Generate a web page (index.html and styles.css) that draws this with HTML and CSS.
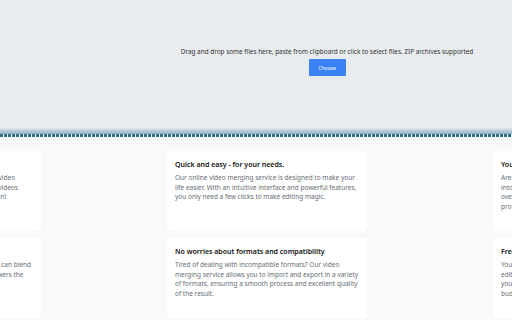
FILE: index.html
```html
<!DOCTYPE html>
<html lang="en">
<head>
  <meta charset="UTF-8">
  <title>Merge videos</title>
  <meta name="viewport" content="width=device-width, initial-scale=1.0">
  <link rel="stylesheet" href="styles.css">
</head>
<body>

  <div class="dropzone">
    <div class="drop-inner">
      <p class="drop-text">Drag and drop some files here, paste from clipboard or click to select files. ZIP archives supported</p>
      <button class="choose">Choose</button>
    </div>
  </div>
  <div class="edge"></div>

  <div class="features">
    <div class="row">
      <div class="card">
        <h3>Merge videos in your browser</h3>
        <p>Put your best moments together with our online video<br>merger and create one smooth story from many videos<br>and share it with all the people you know. Have fun!</p>
      </div>
      <div class="card">
        <h3>Quick and easy - for your needs.</h3>
        <p>Our online video merging service is designed to make your life easier. With an intuitive interface and powerful features, you only need a few clicks to make editing magic.</p>
      </div>
      <div class="card">
        <h3>Your files stay private</h3>
        <p>Are you worried about uploading personal videos<br>into the cloud? Everything is processed safely<br>over a secure connection and your data is<br>protected and removed after processing.</p>
      </div>
    </div>
    <div class="row">
      <div class="card">
        <h3>Creative transitions</h3>
        <p>Add smooth transitions between clips so that you can blend<br>scenes together in a way that truly impresses viewers the<br>same way.</p>
      </div>
      <div class="card">
        <h3>No worries about formats and compatibility</h3>
        <p>Tired of dealing with incompatible formats? Our video merging service allows you to import and export in a variety of formats, ensuring a smooth process and excellent quality of the result.</p>
      </div>
      <div class="card">
        <h3>Free and unlimited</h3>
        <p>You can use every feature of our video<br>editor for free and without any limits, so<br>you can bring your ideas to life with no<br>budget worries at all.</p>
      </div>
    </div>
  </div>

</body>
</html>
```

FILE: styles.css
```css
body {
  margin: 0;
  font-family: 'Noto Sans', sans-serif;
  background: #f7f9fb;
  overflow: hidden;
}

.dropzone {
  background: #e8ecef;
  height: 128px;
  display: flex;
  align-items: flex-start;
  justify-content: center;
}

.drop-inner {
  margin-top: 47px;
  margin-left: 142px;
  display: flex;
  flex-direction: column;
  align-items: center;
}

.drop-text {
  margin: 0 0 3px;
  font-size: 6.4px;
  color: #333;
  white-space: nowrap;
}

.choose {
  width: 37px;
  height: 17px;
  border: 0;
  border-radius: 1px;
  background: #3b82f6;
  color: #fff;
  font-family: 'Noto Sans', sans-serif;
  font-size: 5px;
  padding: 0;
}

.edge {
  height: 9px;
  background:
    repeating-linear-gradient(90deg, #2e6b8c 0 3px, #ffffff 3px 4px) 0 6px / 100% 3px no-repeat,
    linear-gradient(#e2e8eb, #b4c7d2 40%, #5a869e);
  background-color: #f7f9fb;
}

.features {
  padding-top: 14px;
  display: flex;
  flex-direction: column;
  gap: 7px;
}

.row {
  display: flex;
  gap: 126px;
  margin-left: -159px;
}

.card {
  flex: 0 0 200px;
  height: 80px;
  box-sizing: border-box;
  background: #fff;
  border-radius: 3px;
  padding: 9px 8px;
}

.card h3 {
  margin: 0 0 4px;
  font-size: 7px;
  font-weight: 600;
  color: #111;
}

.card p {
  margin: 0;
  font-size: 6.5px;
  line-height: 9.6px;
  color: #666d75;
}
```
